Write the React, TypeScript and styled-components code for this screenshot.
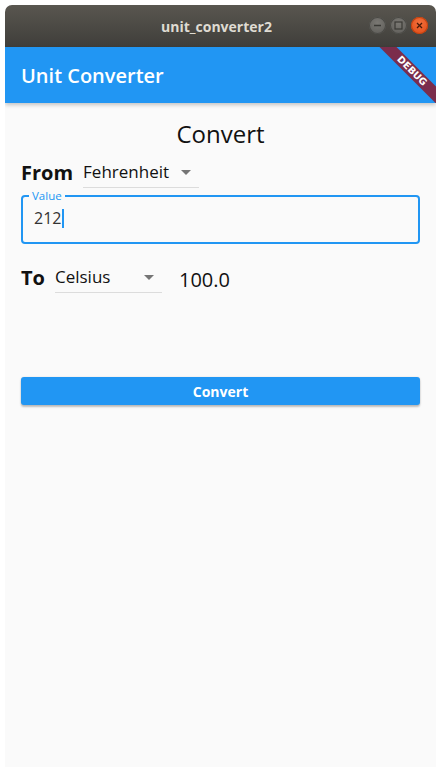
import styled, { createGlobalStyle } from 'styled-components';

const GlobalStyle = createGlobalStyle`
  html, body {
    margin: 0;
    padding: 0;
    background: #ffffff;
  }
  body {
    font-family: "Open Sans", "Noto Sans", sans-serif;
  }
`;

const Window = styled.div`
  margin: 5px 0 0 5px;
  width: 431px;
  height: 762px;
  display: flex;
  flex-direction: column;
  border-radius: 7px 7px 0 0;
  overflow: hidden;
  background: #fafafa;
`;

const TitleBar = styled.div`
  height: 42px;
  flex: none;
  display: flex;
  align-items: center;
  justify-content: center;
  position: relative;
  background: linear-gradient(#59564f, #3f3e3a);
`;

const TitleText = styled.span`
  font-family: "Open Sans", sans-serif;
  font-weight: 700;
  font-size: 14px;
  color: #dfdbd2;
  margin-left: -8px;
`;

const Controls = styled.div`
  position: absolute;
  right: 8px;
  top: 12px;
  display: flex;
  gap: 4px;
`;

interface CircleProps {
  $close?: boolean;
}

const CircleButton = styled.div<CircleProps>`
  width: 17px;
  height: 17px;
  border-radius: 50%;
  display: flex;
  align-items: center;
  justify-content: center;
  background: ${(p) =>
    p.$close
      ? 'radial-gradient(circle at 50% 35%, #f2703c, #dd4814)'
      : 'radial-gradient(circle at 50% 35%, #7a7873, #5b5a56)'};
  box-shadow: inset 0 0 0 1px ${(p) => (p.$close ? '#c2410e' : '#4a4945')};
`;

const AppBar = styled.div`
  height: 56px;
  flex: none;
  display: flex;
  align-items: center;
  padding: 0 16px;
  background: #2196f3;
  box-shadow: 0 2px 4px rgba(0, 0, 0, 0.22);
  position: relative;
  overflow: hidden;
  z-index: 1;
`;

const AppTitle = styled.h1`
  margin: 0;
  font-family: "Open Sans", sans-serif;
  font-weight: 600;
  font-size: 20px;
  color: #ffffff;
`;

const DebugBanner = styled.div`
  position: absolute;
  right: -26px;
  top: 18px;
  width: 100px;
  height: 12px;
  transform: rotate(45deg);
  background: #7b2d4c;
  color: #ffffff;
  font-family: "DejaVu Sans", sans-serif;
  font-weight: 700;
  font-size: 9.6px;
  line-height: 12px;
  text-align: center;
`;

const Body = styled.main`
  flex: 1;
  display: flex;
  flex-direction: column;
  padding: 0 16px;
`;

const Heading = styled.h2`
  margin: 16px 0 0;
  text-align: center;
  font-family: "Open Sans", sans-serif;
  font-weight: 400;
  font-size: 24px;
  line-height: 30px;
  color: #111111;
`;

interface RowProps {
  $top: number;
}

const Row = styled.div<RowProps>`
  display: flex;
  align-items: flex-end;
  margin-top: ${(p) => p.$top}px;
  height: 32px;
`;

const RowLabel = styled.span`
  font-family: "Open Sans", sans-serif;
  font-weight: 700;
  font-size: 20px;
  line-height: 26px;
  color: #111111;
  margin-bottom: 4px;
`;

interface DropProps {
  $width: number;
  $gap: number;
}

const Dropdown = styled.div<DropProps>`
  width: ${(p) => p.$width}px;
  margin-left: ${(p) => p.$gap}px;
  height: 30px;
  display: flex;
  align-items: center;
  justify-content: space-between;
  border-bottom: 1.5px solid #dcdcdc;
  box-sizing: border-box;
  margin-bottom: 2px;
`;

const DropText = styled.span`
  font-family: "Open Sans", sans-serif;
  font-size: 17px;
  color: #111111;
  padding-bottom: 2px;
`;

const Caret = styled.span`
  width: 0;
  height: 0;
  margin-right: 8px;
  border-left: 5px solid transparent;
  border-right: 5px solid transparent;
  border-top: 5px solid #757575;
`;

const Result = styled.span`
  margin-left: 17px;
  margin-bottom: 2px;
  font-family: "Open Sans", sans-serif;
  font-size: 20px;
  color: #111111;
`;

const Field = styled.fieldset`
  margin: 1px 0 0;
  padding: 0 11px 12px;
  height: 53px;
  box-sizing: border-box;
  border: 2px solid #2196f3;
  border-radius: 4px;
  min-width: 0;
`;

const FieldLegend = styled.legend`
  padding: 0 3px;
  margin-left: -5px;
  font-family: "Open Sans", sans-serif;
  font-size: 11.5px;
  line-height: 10px;
  color: #2196f3;
`;

const FieldValue = styled.div`
  display: flex;
  align-items: center;
  margin-top: 6px;
  font-family: "Open Sans", sans-serif;
  font-size: 16px;
  color: #333333;
`;

const Cursor = styled.span`
  width: 2px;
  height: 19px;
  margin-left: 1px;
  background: #2196f3;
`;

const ConvertButton = styled.button`
  margin-top: 82px;
  height: 28px;
  border: none;
  border-radius: 3px;
  background: #2196f3;
  color: #ffffff;
  font-family: "Open Sans", sans-serif;
  font-weight: 700;
  font-size: 14px;
  box-shadow: 0 2px 2px rgba(0, 0, 0, 0.24), 0 0 2px rgba(0, 0, 0, 0.12);
`;

function App() {
  return (
    <>
      <GlobalStyle />
      <Window>
        <TitleBar>
          <TitleText>unit_converter2</TitleText>
          <Controls>
            <CircleButton>
              <svg width="9" height="9" viewBox="0 0 9 9">
                <path d="M1 4.5h7" stroke="#3a3935" strokeWidth="1.3" />
              </svg>
            </CircleButton>
            <CircleButton>
              <svg width="9" height="9" viewBox="0 0 9 9">
                <rect x="1" y="1" width="7" height="7" fill="none" stroke="#3a3935" strokeWidth="1.2" />
              </svg>
            </CircleButton>
            <CircleButton $close>
              <svg width="9" height="9" viewBox="0 0 9 9">
                <path d="M2 2l5 5M7 2l-5 5" stroke="#4a1a08" strokeWidth="1.3" />
              </svg>
            </CircleButton>
          </Controls>
        </TitleBar>
        <AppBar>
          <AppTitle>Unit Converter</AppTitle>
          <DebugBanner>DEBUG</DebugBanner>
        </AppBar>
        <Body>
          <Heading>Convert</Heading>
          <Row $top={9}>
            <RowLabel>From</RowLabel>
            <Dropdown $width={116} $gap={10}>
              <DropText>Fehrenheit</DropText>
              <Caret />
            </Dropdown>
          </Row>
          <Field>
            <FieldLegend>Value</FieldLegend>
            <FieldValue>
              212
              <Cursor />
            </FieldValue>
          </Field>
          <Row $top={19}>
            <RowLabel>To</RowLabel>
            <Dropdown $width={107} $gap={10}>
              <DropText>Celsius</DropText>
              <Caret />
            </Dropdown>
            <Result>100.0</Result>
          </Row>
          <ConvertButton>Convert</ConvertButton>
        </Body>
      </Window>
    </>
  );
}

export default App;
